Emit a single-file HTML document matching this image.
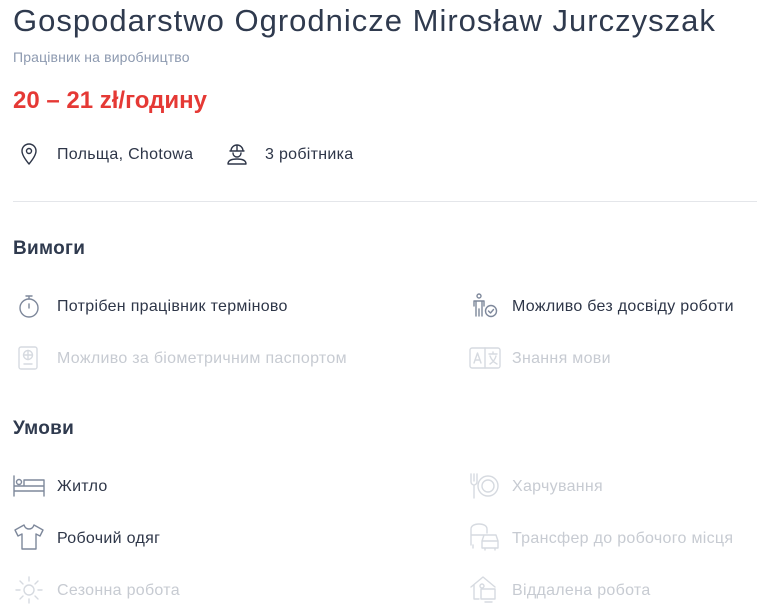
<!DOCTYPE html>
<html><head><meta charset="utf-8"><style>
body{margin:0;width:757px;height:614px;background:#fff;font-family:"Liberation Sans","DejaVu Sans",sans-serif;color:#2e3648;position:relative;overflow:hidden}
.a{position:absolute;white-space:nowrap}
h1{position:absolute;left:13px;top:3px;margin:0;font-size:31px;font-weight:normal;color:#2f3a4e;letter-spacing:1px}
.sub{left:13px;top:49px;font-size:14px;color:#8d9ab0;letter-spacing:0.15px}
.price{left:13px;top:87px;font-size:24px;font-weight:bold;color:#e53935}
.t{font-size:16px;line-height:20px;letter-spacing:0.3px}
.d{color:#c7cbd2}
.h{font-size:19px;font-weight:bold;color:#2f3a4e;letter-spacing:0.3px}
svg{position:absolute;fill:none;stroke-width:1.4;stroke-linecap:round;stroke-linejoin:round}
.i{stroke:#7e889b}.g{stroke:#d6dae0}
.hr{position:absolute;left:13px;top:201px;width:744px;height:1px;background:#e4e6ea}
</style></head><body>
<h1>Gospodarstwo Ogrodnicze Mirosław Jurczyszak</h1>
<div class="a sub">Працівник на виробництво</div>
<div class="a price">20 – 21 zł/годину</div>

<svg style="left:18px;top:142px" width="22" height="24" viewBox="0 0 22 24"><path d="M11 22C6 16 4 12 4 9a7 7 0 0 1 14 0c0 3-2 7-7 13z" stroke="#2e3648"/><circle cx="11" cy="9" r="2.5" stroke="#2e3648"/></svg>
<div class="a t" style="left:57px;top:145px">Польща, Chotowa</div>
<svg style="left:225px;top:141px" width="24" height="25" viewBox="0 0 24 25"><path d="M6 10a6 6 0 0 1 12 0zM12 4v6M5 10h14M8 12a4 4 0 0 0 8 0M3 23c0-4 4-5 9-5s9 1 9 5z" stroke="#2e3648"/></svg>
<div class="a t" style="left:265px;top:145px">3 робітника</div>
<div class="hr"></div>

<div class="a h" style="left:13px;top:238px">Вимоги</div>

<svg class="i" style="left:17px;top:293px" width="24" height="26" viewBox="0 0 24 26"><circle cx="12" cy="15" r="9"/><path d="M9 3h6M12 3v3M12 11v4"/></svg>
<div class="a t" style="left:57px;top:297px">Потрібен працівник терміново</div>
<svg class="g" style="left:17px;top:345px" width="22" height="26" viewBox="0 0 22 26"><rect x="2" y="2" width="18" height="22" rx="2"/><circle cx="11" cy="10" r="4.5"/><path d="M6.5 10h9M11 5.5v9M7 19h8"/></svg>
<div class="a t d" style="left:57px;top:349px">Можливо за біометричним паспортом</div>

<svg class="i" style="left:471px;top:292px" width="28" height="28" viewBox="0 0 28 28"><circle cx="8" cy="4" r="2"/><path d="M3 14V9h10v5M5 9v15M11 9v15M8 17v7"/><circle cx="20" cy="19" r="5.5"/><path d="M17.5 19l2 2 3-3.5"/></svg>
<div class="a t" style="left:512px;top:297px">Можливо без досвіду роботи</div>
<svg class="g" style="left:469px;top:347px" width="32" height="22" viewBox="0 0 32 22"><rect x="1" y="1" width="30" height="20" rx="2"/><path d="M16 1v20M5 16l3.5-10 3.5 10M6 13h5M20 7h8M24 5v2M21 9c2 5 5 7 7 8M27 9c-1 4-3 6-6 8"/></svg>
<div class="a t d" style="left:512px;top:349px">Знання мови</div>

<div class="a h" style="left:13px;top:418px">Умови</div>

<svg class="i" style="left:13px;top:475px" width="32" height="22" viewBox="0 0 32 22"><path d="M1 1v20M31 11v10M1 16h30M1 11h30M11 11V5h20v6"/><circle cx="6" cy="7" r="2.5"/></svg>
<div class="a t" style="left:57px;top:477px">Житло</div>
<svg class="i" style="left:13px;top:523px" width="32" height="28" viewBox="0 0 32 28"><path d="M11 2L2 7l3 6 4-2v15h14V11l4 2 3-6-9-5c-1 3-3 4-5 4s-4-1-5-4z"/></svg>
<div class="a t" style="left:57px;top:529px">Робочий одяг</div>
<svg class="g" style="left:15px;top:576px" width="28" height="28" viewBox="0 0 28 28"><circle cx="14" cy="14" r="5"/><path d="M14 1v4M14 23v4M1 14h4M23 14h4M5 5l3 3M20 20l3 3M5 23l3-3M20 8l3-3"/></svg>
<div class="a t d" style="left:57px;top:581px">Сезонна робота</div>

<svg class="g" style="left:469px;top:472px" width="32" height="28" viewBox="0 0 32 28"><path d="M2 2v8c0 2 2 3 3 3M5 2v7M8 2v8c0 2-2 3-3 3v13"/><circle cx="19" cy="14" r="10"/><circle cx="19" cy="14" r="6"/></svg>
<div class="a t d" style="left:512px;top:477px">Харчування</div>
<svg class="g" style="left:469px;top:523px" width="32" height="28" viewBox="0 0 32 28"><path d="M2 22V6c0-3 3-5 8-5s8 2 8 5v4M2 12h14M4 22v3M13 18l2-6h12l2 6v7H13zM13 18h16M16 25v2M26 25v2"/></svg>
<div class="a t d" style="left:512px;top:529px">Трансфер до робочого місця</div>
<svg class="g" style="left:469px;top:575px" width="32" height="30" viewBox="0 0 32 30"><path d="M2 12L14 2l12 10M5 10v14h5M12 14h14v10H12zM16 27h7"/><circle cx="13" cy="11" r="2"/></svg>
<div class="a t d" style="left:512px;top:581px">Віддалена робота</div>
</body></html>
